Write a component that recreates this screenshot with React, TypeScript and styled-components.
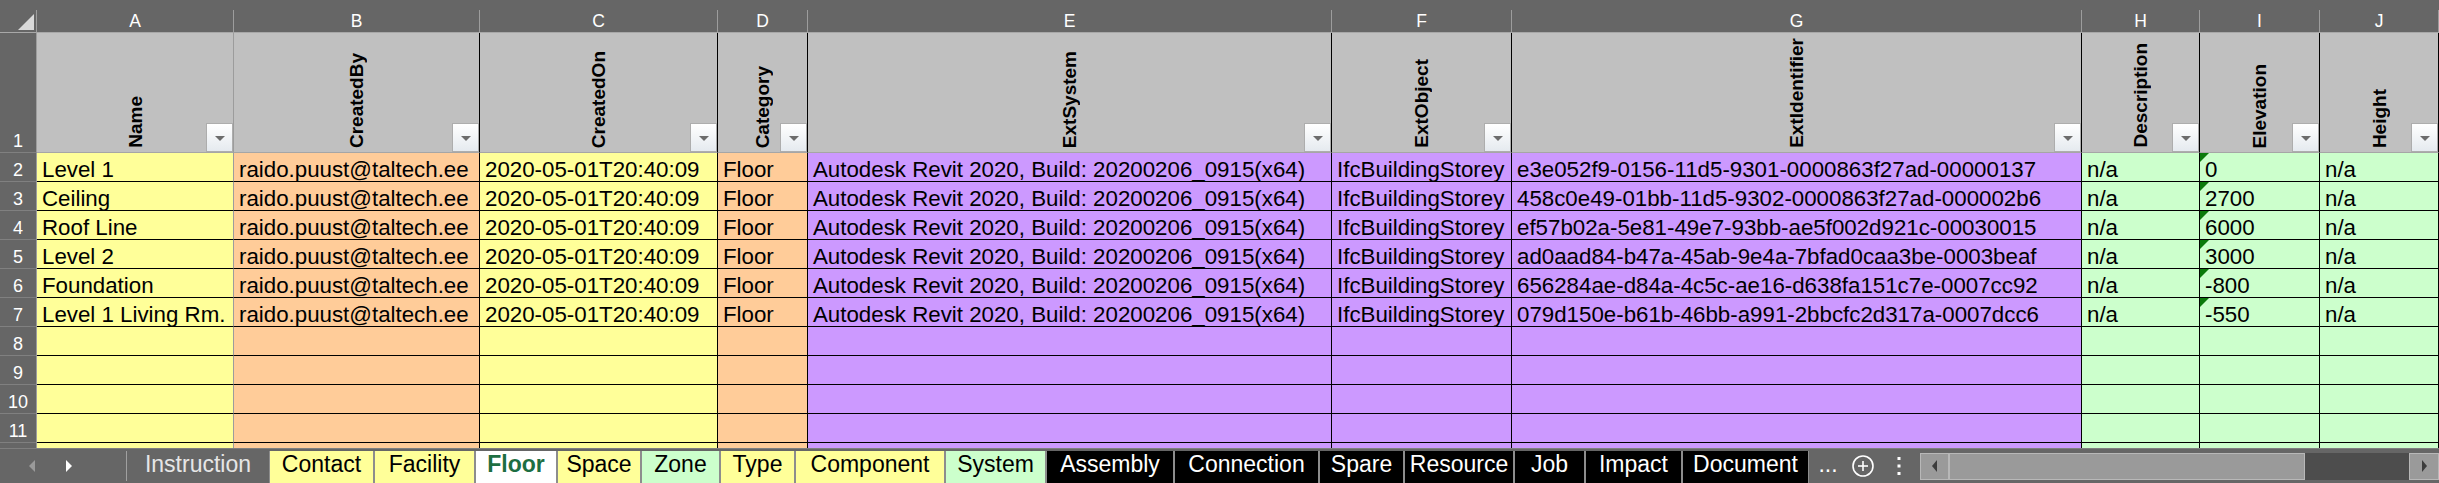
import React from 'react';
import styled, { createGlobalStyle, css } from 'styled-components';

const GlobalStyle = createGlobalStyle`
  html, body { margin: 0; padding: 0; }
  body {
    background: #666666;
    font-family: "Liberation Sans", Arial, sans-serif;
    overflow: hidden;
  }
  *, *::before, *::after { box-sizing: border-box; }
`;

type Column = { key: string; title: string; w: number; fill: string; line: string };

const YELLOW = '#ffff99';
const ORANGE = '#ffcc99';
const PURPLE = '#cc99ff';
const GREEN = '#ccffcc';

const COLS: Column[] = [
  { key: 'A', title: 'Name', w: 197, fill: YELLOW, line: '#9c9c9c' },
  { key: 'B', title: 'CreatedBy', w: 246, fill: ORANGE, line: '#000' },
  { key: 'C', title: 'CreatedOn', w: 238, fill: YELLOW, line: '#000' },
  { key: 'D', title: 'Category', w: 90, fill: ORANGE, line: '#000' },
  { key: 'E', title: 'ExtSystem', w: 524, fill: PURPLE, line: '#000' },
  { key: 'F', title: 'ExtObject', w: 180, fill: PURPLE, line: '#000' },
  { key: 'G', title: 'ExtIdentifier', w: 570, fill: PURPLE, line: '#000' },
  { key: 'H', title: 'Description', w: 118, fill: GREEN, line: '#000' },
  { key: 'I', title: 'Elevation', w: 120, fill: GREEN, line: '#000' },
  { key: 'J', title: 'Height', w: 119, fill: GREEN, line: '#000' },
];

const REVIT = 'Autodesk Revit 2020, Build: 20200206_0915(x64)';
const MAIL = 'raido.puust@taltech.ee';
const DATE = '2020-05-01T20:40:09';

const ROWS: string[][] = [
  ['Level 1', MAIL, DATE, 'Floor', REVIT, 'IfcBuildingStorey', 'e3e052f9-0156-11d5-9301-0000863f27ad-00000137', 'n/a', '0', 'n/a'],
  ['Ceiling', MAIL, DATE, 'Floor', REVIT, 'IfcBuildingStorey', '458c0e49-01bb-11d5-9302-0000863f27ad-000002b6', 'n/a', '2700', 'n/a'],
  ['Roof Line', MAIL, DATE, 'Floor', REVIT, 'IfcBuildingStorey', 'ef57b02a-5e81-49e7-93bb-ae5f002d921c-00030015', 'n/a', '6000', 'n/a'],
  ['Level 2', MAIL, DATE, 'Floor', REVIT, 'IfcBuildingStorey', 'ad0aad84-b47a-45ab-9e4a-7bfad0caa3be-0003beaf', 'n/a', '3000', 'n/a'],
  ['Foundation', MAIL, DATE, 'Floor', REVIT, 'IfcBuildingStorey', '656284ae-d84a-4c5c-ae16-d638fa151c7e-0007cc92', 'n/a', '-800', 'n/a'],
  ['Level 1 Living Rm.', MAIL, DATE, 'Floor', REVIT, 'IfcBuildingStorey', '079d150e-b61b-46bb-a991-2bbcfc2d317a-0007dcc6', 'n/a', '-550', 'n/a'],
];

const EMPTY_ROWS = [8, 9, 10, 11];

type TabKind = 'plain' | 'yellow' | 'green' | 'active' | 'black';
const TABS: { label: string; kind: TabKind; w: number }[] = [
  { label: 'Instruction', kind: 'plain', w: 140 },
  { label: 'Contact', kind: 'yellow', w: 103 },
  { label: 'Facility', kind: 'yellow', w: 99 },
  { label: 'Floor', kind: 'active', w: 80 },
  { label: 'Space', kind: 'yellow', w: 82 },
  { label: 'Zone', kind: 'green', w: 77 },
  { label: 'Type', kind: 'yellow', w: 73 },
  { label: 'Component', kind: 'yellow', w: 148 },
  { label: 'System', kind: 'green', w: 99 },
  { label: 'Assembly', kind: 'black', w: 126 },
  { label: 'Connection', kind: 'black', w: 143 },
  { label: 'Spare', kind: 'black', w: 83 },
  { label: 'Resource', kind: 'black', w: 108 },
  { label: 'Job', kind: 'black', w: 69 },
  { label: 'Impact', kind: 'black', w: 95 },
  { label: 'Document', kind: 'black', w: 125 },
];

/* ---------- layout ---------- */

const Page = styled.div`
  width: 2439px;
  height: 483px;
  display: flex;
  flex-direction: column;
  background: #666666;
  overflow: hidden;
`;

const TopStrip = styled.div`
  height: 10px;
  flex: none;
`;

const Sheet = styled.div`
  flex: none;
  display: grid;
  grid-template-columns: 37px ${COLS.map((c) => `${c.w}px`).join(' ')};
  grid-template-rows: 23px 120px repeat(10, 29px) 5px;
  overflow: hidden;
`;

const Corner = styled.div`
  position: relative;
  border-right: 1px solid #9d9d9d;
  border-bottom: 1px solid #a8a8a8;
  &::after {
    content: '';
    position: absolute;
    right: 2px;
    bottom: 2px;
    border-style: solid;
    border-width: 0 0 16px 16px;
    border-color: transparent transparent #dadada transparent;
  }
`;

const ColLetter = styled.div`
  display: flex;
  align-items: center;
  justify-content: center;
  color: #ffffff;
  font-size: 17.5px;
  border-right: 1px solid #9d9d9d;
  border-bottom: 1px solid #a8a8a8;
`;

const RowNum = styled.div`
  display: flex;
  align-items: flex-end;
  justify-content: center;
  color: #ffffff;
  font-size: 18px;
  line-height: 22px;
  border-right: 1px solid #9d9d9d;
  border-bottom: 1px solid #808080;
  overflow: hidden;
`;

const RowNumStub = styled.div`
  border-right: 1px solid #9d9d9d;
`;

const HeadCell = styled.div<{ $line: string }>`
  position: relative;
  background: #c0c0c0;
  border-right: 1px solid ${(p) => p.$line};
  border-bottom: 1px solid #a6a6a6;
  display: flex;
  justify-content: center;
  align-items: flex-end;
  padding-bottom: 4px;
`;

const VText = styled.span`
  writing-mode: vertical-rl;
  transform: rotate(180deg);
  font-weight: 700;
  font-size: 19px;
  line-height: 1;
  color: #000;
  white-space: nowrap;
`;

const FilterBtn = styled.div`
  position: absolute;
  right: 0;
  bottom: 0;
  width: 27px;
  height: 29px;
  border: 1px solid #adadad;
  background: linear-gradient(#ffffff, #e5eaef);
  &::after {
    content: '';
    position: absolute;
    left: 50%;
    top: 50%;
    margin-left: -5px;
    margin-top: -2px;
    border-left: 5px solid transparent;
    border-right: 5px solid transparent;
    border-top: 5px solid #6c6c6c;
  }
`;

const Cell = styled.div<{ $fill: string; $line: string; $flag?: boolean; $stub?: boolean }>`
  position: relative;
  background: ${(p) => p.$fill};
  border-right: 1px solid ${(p) => p.$line};
  border-bottom: ${(p) => (p.$stub ? 'none' : '1px solid #000')};
  display: flex;
  align-items: flex-end;
  padding: 0 4px 0 5px;
  font-size: 22.3px;
  line-height: 22px;
  color: #000;
  white-space: nowrap;
  overflow: hidden;
  ${(p) =>
    p.$flag &&
    css`
      &::before {
        content: '';
        position: absolute;
        left: 0;
        top: 0;
        border-top: 9px solid #0b7a0b;
        border-right: 9px solid transparent;
      }
    `}
`;

/* ---------- sheet tabs ---------- */

const TabBar = styled.div`
  flex: 1;
  display: flex;
  align-items: stretch;
  border-top: 1px solid #7f7f7f;
  background: #666666;
`;

const NavArea = styled.div`
  width: 126px;
  flex: none;
  display: flex;
  align-items: center;
  padding-left: 29px;
  gap: 31px;
`;

const NavArrow = styled.span<{ $dir: 'left' | 'right'; $dim?: boolean }>`
  width: 0;
  height: 0;
  border-top: 6px solid transparent;
  border-bottom: 6px solid transparent;
  ${(p) =>
    p.$dir === 'left'
      ? css`border-right: 6px solid ${p.$dim ? '#9a9a9a' : '#ffffff'};`
      : css`border-left: 6px solid ${p.$dim ? '#9a9a9a' : '#ffffff'};`}
`;

const Divider = styled.div`
  width: 1px;
  height: 30px;
  align-self: center;
  background: #a0a0a0;
  flex: none;
`;

const TabStrip = styled.div`
  display: flex;
  align-items: flex-end;
  gap: 2px;
  margin-left: 1px;
  flex: none;
`;

const tabKinds: Record<TabKind, ReturnType<typeof css>> = {
  plain: css`background: transparent; color: #e6e6e6;`,
  yellow: css`background: ${YELLOW}; color: #000;`,
  green: css`background: ${GREEN}; color: #000;`,
  active: css`background: #ffffff; color: #1d6e42; font-weight: 700;`,
  black: css`background: #000000; color: #ffffff;`,
};

const Tab = styled.div<{ $kind: TabKind; $w: number }>`
  width: ${(p) => p.$w}px;
  height: 32px;
  display: flex;
  align-items: center;
  justify-content: center;
  padding-bottom: 6px;
  font-size: 23px;
  line-height: 1;
  white-space: nowrap;
  box-shadow: ${(p) => (p.$kind === 'plain' ? 'none' : '1px 0 0 #8d8d8d, -1px 0 0 #8d8d8d')};
  ${(p) => tabKinds[p.$kind]}
`;

const Ellipsis = styled.div`
  width: 40px;
  flex: none;
  display: flex;
  align-items: center;
  justify-content: center;
  padding-bottom: 4px;
  color: #ffffff;
  font-size: 23px;
`;

const IconSlot = styled.div<{ $w: number }>`
  width: ${(p) => p.$w}px;
  flex: none;
  display: flex;
  align-items: center;
  justify-content: center;
`;

const HScroll = styled.div`
  flex: 1;
  align-self: center;
  height: 27px;
  display: flex;
  background: #4d4d4d;
`;

const ScrollBtn = styled.div<{ $w: number }>`
  width: ${(p) => p.$w}px;
  flex: none;
  display: flex;
  align-items: center;
  justify-content: center;
  background: #9a9a9a;
  border: 1px solid #b8b8b8;
`;

const ScrollArrow = styled.span<{ $dir: 'left' | 'right' }>`
  width: 0;
  height: 0;
  border-top: 6px solid transparent;
  border-bottom: 6px solid transparent;
  ${(p) =>
    p.$dir === 'left'
      ? css`border-right: 5px solid #3c3c3c;`
      : css`border-left: 5px solid #3c3c3c;`}
`;

const Thumb = styled.div`
  width: 356px;
  flex: none;
  background: #9a9a9a;
  border: 1px solid #b8b8b8;
`;

const Track = styled.div`
  flex: 1;
`;

export default function App() {
  return (
    <>
      <GlobalStyle />
      <Page>
        <TopStrip />
        <Sheet>
          <Corner />
          {COLS.map((c) => (
            <ColLetter key={c.key}>{c.key}</ColLetter>
          ))}

          <RowNum>1</RowNum>
          {COLS.map((c) => (
            <HeadCell key={c.key} $line={c.line}>
              <VText>{c.title}</VText>
              <FilterBtn />
            </HeadCell>
          ))}

          {ROWS.map((row, r) => (
            <React.Fragment key={r}>
              <RowNum>{r + 2}</RowNum>
              {row.map((v, i) => (
                <Cell key={i} $fill={COLS[i].fill} $line={COLS[i].line} $flag={COLS[i].key === 'I'}>
                  {v}
                </Cell>
              ))}
            </React.Fragment>
          ))}

          {EMPTY_ROWS.map((n) => (
            <React.Fragment key={n}>
              <RowNum>{n}</RowNum>
              {COLS.map((c) => (
                <Cell key={c.key} $fill={c.fill} $line={c.line} />
              ))}
            </React.Fragment>
          ))}

          <RowNumStub />
          {COLS.map((c) => (
            <Cell key={c.key} $fill={c.fill} $line={c.line} $stub />
          ))}
        </Sheet>

        <TabBar>
          <NavArea>
            <NavArrow $dir="left" $dim />
            <NavArrow $dir="right" />
          </NavArea>
          <Divider />
          <TabStrip>
            {TABS.map((t) => (
              <Tab key={t.label} $kind={t.kind} $w={t.w}>
                {t.label}
              </Tab>
            ))}
          </TabStrip>
          <Ellipsis>...</Ellipsis>
          <IconSlot $w={30}>
            <svg width="24" height="24" viewBox="0 0 24 24" fill="none" stroke="#ffffff" strokeWidth="1.6">
              <circle cx="12" cy="12" r="10" />
              <line x1="12" y1="7" x2="12" y2="17" />
              <line x1="7" y1="12" x2="17" y2="12" />
            </svg>
          </IconSlot>
          <IconSlot $w={42}>
            <svg width="6" height="22" viewBox="0 0 6 22" fill="#ffffff">
              <rect x="1.5" y="2" width="3" height="3" />
              <rect x="1.5" y="9.5" width="3" height="3" />
              <rect x="1.5" y="17" width="3" height="3" />
            </svg>
          </IconSlot>
          <HScroll>
            <ScrollBtn $w={29}>
              <ScrollArrow $dir="left" />
            </ScrollBtn>
            <Thumb />
            <Track />
            <ScrollBtn $w={30}>
              <ScrollArrow $dir="right" />
            </ScrollBtn>
          </HScroll>
        </TabBar>
      </Page>
    </>
  );
}
